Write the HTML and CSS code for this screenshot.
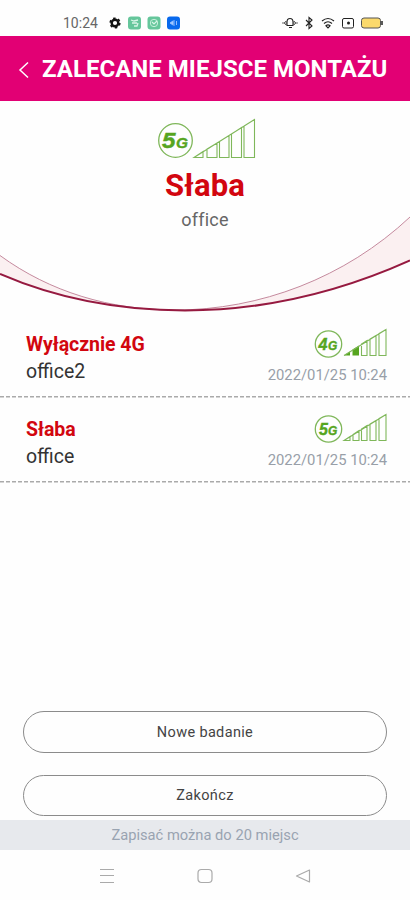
FILE: index.html
```html
<!DOCTYPE html>
<html lang="pl">
<head>
<meta charset="utf-8">
<title>Zalecane miejsce montażu</title>
<link rel="stylesheet" href="styles.css">
</head>
<body>
<div class="status">
  <span class="clock">10:24</span>
  <svg class="status-left" width="72" height="16" viewBox="0 0 72 16">
    <circle cx="7" cy="8" r="3.3" fill="none" stroke="#111" stroke-width="2.4"/>
    <circle cx="7" cy="8" r="4.8" fill="none" stroke="#111" stroke-width="1.6" stroke-dasharray="2.5 2.53"/>
    <rect x="20" y="1.5" width="13" height="13" rx="3" fill="#65c69b"/>
    <path d="M23 5l3 1 4-1M24 8h5M26 11h3l1-3" fill="none" stroke="#d9f5e8" stroke-width="1.3"/>
    <rect x="39.500" y="1.500" width="13" height="13" rx="3" fill="#65c69b"/>
    <circle cx="46" cy="8" r="3.700" fill="none" stroke="#c8efdc"/>
    <path d="M44 7l2 2 3-3" fill="none" stroke="#d9f5e8" stroke-width="1.200"/>
    <rect x="59" y="1.500" width="13" height="13" rx="3" fill="#0869ed"/>
    <path d="M62 8l3-2v4zM66 5v6M68.500 6v4" fill="#b5d5ff" stroke="#8fbcff"/>
  </svg>
  <svg class="status-right" width="102" height="16" viewBox="0 0 102 16" fill="none" stroke="#222">
    <path d="M0 8h2l2-2v4l-2-2M16 8h-2l-2-2v4l2-2" stroke="#666"/>
    <path d="M5 10.500V7q0-3.500 3-3.500t3 3.500v3.500zM7 12.500h3" stroke-width="1.100"/>
    <path d="M24 5l6 6-3 2.500v-11l3 2.500-6 6" stroke-width="1.100"/>
    <path d="M40 6q6-5 12 0M42 8.500q4-3.500 8 0M44 10.800q2-1.800 4 0l-2 2z" stroke-width="1.200"/>
    <rect x="60.500" y="3.500" width="11" height="9.500" rx="1.500"/>
    <circle cx="66.500" cy="8" r="1.500" fill="#222" stroke="none"/>
    <rect x="79.500" y="3" width="19" height="10" rx="2.500" fill="#fbd96c" stroke="#555"/>
    <path d="M100 6v4" stroke-width="1.500"/>
  </svg>
</div>
<header class="bar">
  <svg class="back" width="12" height="18" viewBox="0 0 12 18"><path d="M10 1.500L2 9l8 7.500" fill="none" stroke="#fff" stroke-width="1.500"/></svg>
  <h1>ZALECANE MIEJSCE MONTAŻU</h1>
</header>
<section class="hero">
  <svg class="curve" width="410" height="214" viewBox="0 101 410 214" fill="none">
    <path d="M0 255.500C50 292 110 310 175 310C260 310 345 278 410 217V260.500C340 292 265 310.500 185 310.500C125 310.500 60 300 0 274Z" fill="#fbf0f1"/>
    <path d="M0 255.500C50 292 110 310 175 310C260 310 345 278 410 217" stroke="#c58a9e"/>
    <path d="M0 274C60 300 125 310.500 185 310.500C265 310.500 340 292 410 260.500" stroke="#961a40" stroke-width="2"/>
  </svg>
  <svg class="signal-large" width="98" height="42" viewBox="0 0 98 42">
    <circle cx="17.500" cy="22.500" r="16.800" class="ring"/>
    <text x="4" y="30" class="gen" font-size="22" textLength="13.500" lengthAdjust="spacingAndGlyphs">5</text>
    <text x="18" y="30" class="gen" font-size="15" textLength="12" lengthAdjust="spacingAndGlyphs">G</text>
    <path d="M36 39.500L45 33.500V39.500ZM49 39.500V31L59 25V39.500ZM61.500 39.500V23.500L71 17.500V39.500ZM73.500 39.500V16L83.500 9.500V39.500ZM86 39.500V8L96.500 1.500V39.500ZM36 39.500L96.500 1.500" class="steps"/>
  </svg>
  <h2>Słaba</h2>
  <p>office</p>
</section>
<main class="list">
  <article class="row">
    <div><h3>Wyłącznie 4G</h3><p class="place">office2</p></div>
    <div class="meta">
      <svg width="73" height="30" viewBox="0 0 73 30">
        <circle cx="14.500" cy="16" r="13.200" class="ring"/>
        <text x="4.500" y="21.500" class="gen" font-size="16">4</text>
        <text x="14" y="21.500" class="gen" font-size="12">G</text>
        <path d="M30 27.500L36 23.500V27.500ZM38.500 27.500V21.500L45 17.500V27.500Z" class="full"/>
        <path d="M47.500 27.500V16L53 12.500V27.500ZM56 27.500V11L62 7.500V27.500ZM65 27.500V5.500L72 1.500V27.500ZM30 27.500L72 1.500" class="steps"/>
      </svg>
      <time>2022/01/25 10:24</time>
    </div>
  </article>
  <article class="row">
    <div><h3>Słaba</h3><p class="place">office</p></div>
    <div class="meta">
      <svg width="73" height="30" viewBox="0 0 73 30">
        <circle cx="14.500" cy="16" r="13.200" class="ring"/>
        <text x="5" y="21.500" class="gen" font-size="16">5</text>
        <text x="14" y="21.500" class="gen" font-size="12">G</text>
        <path d="M30 27.500L36 23.500V27.500ZM39 27.500V21.500L45 17.500V27.500ZM47.500 27.500V16L53 12.500V27.500ZM56 27.500V11L62 7.500V27.500ZM65 27.500V5.500L72 1.500V27.500ZM30 27.500L72 1.500" class="steps"/>
      </svg>
      <time>2022/01/25 10:24</time>
    </div>
  </article>
</main>
<div class="actions">
  <button>Nowe badanie</button>
  <button>Zakończ</button>
</div>
<footer>Zapisać można do 20 miejsc</footer>
<nav>
  <svg width="16" height="16" viewBox="0 0 16 16"><path d="M1 1.500h14M1 7.500h14M1 14.500h14"/></svg>
  <svg width="16" height="16" viewBox="0 0 16 16"><rect x="1" y="1.500" width="14" height="13" rx="3.500"/></svg>
  <svg width="16" height="16" viewBox="0 0 16 16"><path d="M14.500 2v12L1.500 8Z" stroke-linejoin="round"/></svg>
</nav>
</body>
</html>
```
FILE: styles.css
```css
* { box-sizing: border-box; }
body {
  margin: 0;
  height: 900px;
  display: flex;
  flex-direction: column;
  background: #fefefe;
  font-family: Roboto, sans-serif;
  overflow: hidden;
}
h1, h2, h3, p { margin: 0; }
svg { display: block; flex: none; }
.status {
  height: 36px;
  padding: 10px 26px 0 63px;
  display: flex;
  align-items: flex-start;
}
.clock { width: 45px; font-size: 14px; line-height: 27px; color: #666; }
.status-left { margin-top: 5px; }
.status-right { margin: 5px 0 0 auto; }
.bar {
  height: 65px;
  background: #e20074;
  display: flex;
  align-items: center;
  padding: 0 0 0 18px;
}
.back { margin-top: 3px; }
h1 {
  margin-left: 12px;
  font-size: 24px;
  font-weight: 700;
  letter-spacing: 0.03px;
  color: #fff;
  white-space: nowrap;
}
.hero {
  height: 214px;
  position: relative;
  display: flex;
  flex-direction: column;
  align-items: center;
  padding-top: 17px;
}
.curve { position: absolute; left: 0; top: 0; }
.signal-large { margin-left: 4px; }
h2 { font-size: 31px; line-height: 38px; margin-top: 7px; letter-spacing: 0.2px; color: #d2060f; }
.hero p { font-size: 18px; line-height: 24px; margin-top: 3px; letter-spacing: 0.2px; color: #666; }
.ring { fill: none; stroke: #7fb75a; stroke-width: 1.3; }
.gen { font-family: "Liberation Sans", sans-serif; font-weight: 700; font-style: italic; fill: #56a51f; stroke: #56a51f; stroke-width: 0.4; }
.steps { fill: none; stroke: #7fb75a; stroke-width: 1.1; }
.full { fill: #56a51f; }
.row {
  height: 85px;
  display: flex;
  justify-content: space-between;
  padding: 15px 23px 0 26px;
  background: repeating-linear-gradient(90deg, #aaa 0 4px, transparent 4px 6px) 0 calc(100% - 1px) / 100% 1.5px no-repeat;
}
.row:first-child { height: 83px; padding-top: 13px; }
h3 { font-size: 19.5px; line-height: 33px; letter-spacing: -0.05px; color: #d2060f; }
.place { font-size: 19.5px; line-height: 22px; color: #333; }
.meta { display: flex; flex-direction: column; align-items: flex-end; }
time { font-size: 14.8px; line-height: 20px; margin-top: 7px; color: #989fa8; white-space: nowrap; }
.actions { margin: auto 23px 4px; display: flex; flex-direction: column; gap: 22px; }
button {
  height: 41.5px;
  border: 1px solid #8b8b8b;
  border-radius: 21px;
  background: transparent;
  color: #444;
  font: 14.5px Roboto, sans-serif;
  letter-spacing: 0.35px;
  padding-top: 2px;
}
footer {
  height: 30px;
  background: #e7e9ed;
  color: #99a3b1;
  font-size: 14.7px;
  line-height: 31px;
  text-align: center;
}
nav {
  height: 50px;
  display: flex;
  justify-content: space-between;
  padding: 18px 99px 0 99px;
}
nav svg { fill: none; stroke: #aaa; stroke-width: 1.2; }
```
